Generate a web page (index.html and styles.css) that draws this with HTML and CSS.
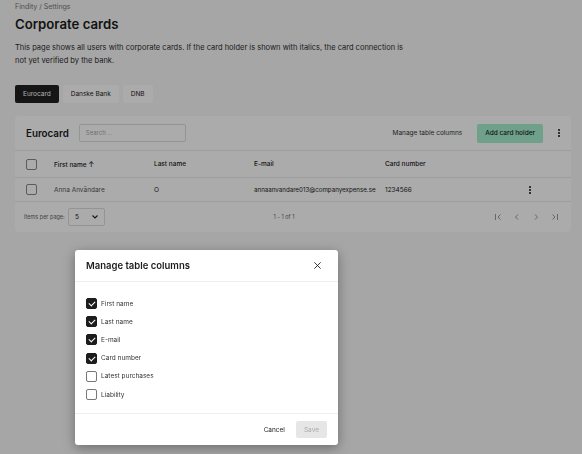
FILE: index.html
```html
<!DOCTYPE html>
<html lang="en">
<head>
    <meta charset="UTF-8">
    <meta name="viewport" content="width=device-width, initial-scale=1.0">
    <title>Corporate cards</title>
    <link rel="stylesheet" href="styles.css">
</head>
<body>
    <div class="page">
        <div class="breadcrumb">Findity / Settings</div>
        <h1>Corporate cards</h1>
        <p class="intro">This page shows all users with corporate cards. If the card holder is shown with italics, the card connection is not yet verified by the bank.</p>

        <div class="tabs">
            <button class="tab active">Eurocard</button>
            <button class="tab">Danske Bank</button>
            <button class="tab">DNB</button>
        </div>

        <div class="card">
            <div class="card-header">
                <h2>Eurocard</h2>
                <div class="search">Search ...</div>
                <div class="spacer"></div>
                <button class="link-btn">Manage table columns</button>
                <button class="primary-btn">Add card holder</button>
                <span class="kebab"><i></i><i></i><i></i></span>
            </div>

            <div class="row head">
                <span class="checkbox"></span>
                <span>First name <span class="arrow">&#8593;</span></span>
                <span>Last name</span>
                <span>E-mail</span>
                <span>Card number</span>
                <span></span>
            </div>
            <div class="row">
                <span class="checkbox"></span>
                <span class="muted">Anna Användare</span>
                <span>O</span>
                <span class="email">annaanvandare013@companyexpense.se</span>
                <span>1234566</span>
                <span class="kebab"><i></i><i></i><i></i></span>
            </div>

            <div class="table-footer">
                <span class="per-page">Items per page:</span>
                <div class="select">
                    <span>5</span>
                    <svg width="8" height="6" viewBox="0 0 8 6"><path d="M1.5 1.5 L4 4 L6.5 1.5" fill="none" stroke="#222" stroke-width="1.1"/></svg>
                </div>
                <span class="range">1 - 1 of 1</span>
                <div class="pager">
                    <svg width="10" height="10" viewBox="0 0 10 10"><path d="M2.5 2v6M7.5 2.5 5 5l2.5 2.5" fill="none" stroke="#999" stroke-width="1"/></svg>
                    <svg width="10" height="10" viewBox="0 0 10 10"><path d="M6 2.5 3.5 5 6 7.5" fill="none" stroke="#999" stroke-width="1"/></svg>
                    <svg width="10" height="10" viewBox="0 0 10 10"><path d="M4 2.5 6.5 5 4 7.5" fill="none" stroke="#999" stroke-width="1"/></svg>
                    <svg width="10" height="10" viewBox="0 0 10 10"><path d="M2.5 2.5 5 5 2.5 7.5M7.5 2v6" fill="none" stroke="#999" stroke-width="1"/></svg>
                </div>
            </div>
        </div>
    </div>

    <div class="overlay"></div>

    <div class="modal">
        <div class="modal-header">
            <h3>Manage table columns</h3>
            <svg width="9" height="9" viewBox="0 0 10 10"><path d="M1.5 1.5l7 7M8.5 1.5l-7 7" stroke="#222" stroke-width="1"/></svg>
        </div>
        <div class="modal-body">
            <label class="option"><span class="box checked"></span>First name</label>
            <label class="option"><span class="box checked"></span>Last name</label>
            <label class="option"><span class="box checked"></span>E-mail</label>
            <label class="option"><span class="box checked"></span>Card number</label>
            <label class="option"><span class="box"></span>Latest purchases</label>
            <label class="option"><span class="box"></span>Liability</label>
        </div>
        <div class="modal-footer">
            <button class="cancel">Cancel</button>
            <button class="save">Save</button>
        </div>
    </div>
</body>
</html>
```

FILE: styles.css
```css
* {
    box-sizing: border-box;
}
body {
    margin: 0;
    height: 454px;
    overflow: hidden;
    font-family: Inter, "Noto Sans", sans-serif;
    background: #f8f8f8;
    color: #1c1c1c;
}
button {
    font-family: inherit;
    border: none;
    cursor: pointer;
}
.page {
    padding: 2px 11px 0 15px;
}
.breadcrumb {
    font-size: 7px;
    color: #777;
    line-height: 9px;
}
h1 {
    margin: 4px 0 0;
    font-size: 13.2px;
    font-weight: 600;
    line-height: 18px;
}
.intro {
    margin: 8px 0 0;
    max-width: 392px;
    font-size: 7.5px;
    line-height: 13px;
    color: #2a2a2a;
}
.tabs {
    display: flex;
    gap: 4px;
    margin-top: 18px;
}
.tab {
    height: 18px;
    padding: 0 8px;
    border-radius: 2px;
    font-size: 6.5px;
    background: #ffffff;
    color: #222;
}
.tab.active {
    background: #202020;
    color: #fff;
}
.card {
    margin-top: 13px;
    background: #fff;
    border-radius: 4px;
}
.card-header {
    display: flex;
    align-items: center;
    height: 35px;
    padding: 0 6px 0 11px;
    border-bottom: 1px solid #eaeaea;
}
.card-header h2 {
    margin: 0 10px 0 0;
    font-size: 9.8px;
    font-weight: 600;
}
.search {
    width: 107px;
    height: 18px;
    padding: 0 6px;
    border: 1px solid #ddd;
    border-radius: 2px;
    font-size: 6px;
    line-height: 16px;
    color: #aaa;
}
.spacer {
    flex: 1;
}
.link-btn {
    background: none;
    font-size: 6.5px;
    color: #333;
    padding: 0;
    margin-right: 15px;
}
.primary-btn {
    height: 19px;
    padding: 0 8px;
    border-radius: 2px;
    background: #a6efce;
    color: #1b1b1b;
    font-size: 6.5px;
    font-weight: 500;
}
.kebab {
    display: inline-flex;
    flex-direction: column;
    align-items: center;
    gap: 1px;
    width: 12px;
    margin-left: 10px;
}
.kebab i {
    width: 2px;
    height: 2px;
    border-radius: 50%;
    background: #111;
}
.row {
    display: grid;
    grid-template-columns: 28px 100px 100px 131px 1fr 12px;
    align-items: center;
    height: 24px;
    padding: 0 35px 0 11px;
    border-bottom: 1px solid #eaeaea;
    font-size: 6.5px;
    color: #222;
}
.row .kebab {
    margin-left: 0;
}
.row.head {
    height: 27px;
    font-weight: 500;
}
.row .email {
    font-size: 6.2px;
}
.arrow {
    font-size: 7px;
}
.muted {
    color: #555;
}
.checkbox {
    width: 11px;
    height: 11px;
    border: 1px solid #888;
    border-radius: 2px;
}
.table-footer {
    display: grid;
    grid-template-columns: 44px 37px 1fr 67px;
    align-items: center;
    height: 30px;
    padding: 0 11px 0 9px;
    font-size: 5.5px;
    color: #666;
}
.select {
    display: flex;
    align-items: center;
    justify-content: space-between;
    height: 18px;
    padding: 0 5px 0 6px;
    border: 1px solid #ddd;
    border-radius: 2px;
    font-size: 6.5px;
    color: #222;
}
.range {
    text-align: center;
    padding-right: 30px;
}
.pager {
    display: flex;
    justify-content: space-between;
}
.overlay {
    position: fixed;
    inset: 0;
    background: rgba(0, 0, 0, 0.33);
}
.modal {
    position: absolute;
    left: 75px;
    top: 250px;
    width: 263px;
    background: #fff;
    border-radius: 3px;
    box-shadow: 0 3px 12px rgba(0, 0, 0, 0.35);
}
.modal-header {
    display: flex;
    align-items: center;
    justify-content: space-between;
    height: 32px;
    padding: 0 16px 0 11px;
    border-bottom: 1px solid #eee;
}
.modal-header h3 {
    margin: 0;
    font-size: 9.5px;
    font-weight: 600;
}
.modal-body {
    display: flex;
    flex-direction: column;
    gap: 7px;
    padding: 16px 11px 13px;
    border-bottom: 1px solid #eee;
}
.option {
    display: flex;
    align-items: center;
    gap: 4px;
    height: 11.2px;
    font-size: 6.5px;
    color: #333;
}
.box {
    width: 11px;
    height: 11px;
    border: 1px solid #777;
    border-radius: 2px;
}
.box.checked {
    background: #1c1c1c;
    border-color: #1c1c1c;
    position: relative;
}
.box.checked::after {
    content: "";
    position: absolute;
    left: 3px;
    top: 1px;
    width: 3px;
    height: 5px;
    border: solid #fff;
    border-width: 0 1.2px 1.2px 0;
    transform: rotate(45deg);
}
.modal-footer {
    display: flex;
    align-items: center;
    justify-content: flex-end;
    gap: 11px;
    height: 31px;
    padding: 0 11px;
}
.cancel {
    background: none;
    font-size: 6.5px;
    color: #222;
    padding: 0;
}
.save {
    height: 17px;
    padding: 0 8px;
    border-radius: 2px;
    background: #e6e6e6;
    color: #aaa;
    font-size: 6.5px;
}
```
